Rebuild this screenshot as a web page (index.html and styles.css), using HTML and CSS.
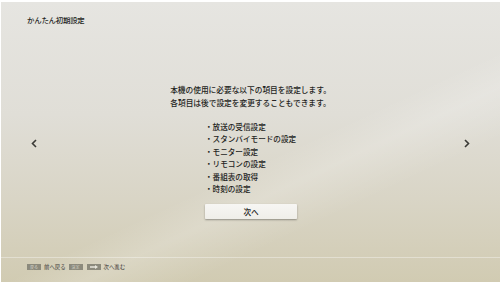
FILE: index.html
```html
<!DOCTYPE html>
<html lang="ja">
<head>
    <meta charset="UTF-8">
    <meta name="viewport" content="width=device-width, initial-scale=1.0">
    <title>かんたん初期設定</title>
    <link rel="stylesheet" href="styles.css">
</head>
<body>
    <div class="screen">
        <header class="title-bar">
            <h1>かんたん初期設定</h1>
        </header>

        <main class="setup">
            <div class="nav nav-prev">
                <svg width="6" height="9" viewBox="0 0 6 9"><path d="M5 1 L1.5 4.5 L5 8" fill="none" stroke="#3a3a36" stroke-width="1.6"/></svg>
            </div>

            <div class="content">
                <p class="message">本機の使用に必要な以下の項目を設定します。<br>各項目は後で設定を変更することもできます。</p>
                <div class="steps">
                    <ul>
                        <li>・放送の受信設定</li>
                        <li>・スタンバイモードの設定</li>
                        <li>・モニター設定</li>
                        <li>・リモコンの設定</li>
                        <li>・番組表の取得</li>
                        <li>・時刻の設定</li>
                    </ul>
                    <button class="next-btn">次へ</button>
                </div>
            </div>

            <div class="nav nav-next">
                <svg width="6" height="9" viewBox="0 0 6 9"><path d="M1 1 L4.5 4.5 L1 8" fill="none" stroke="#3a3a36" stroke-width="1.6"/></svg>
            </div>
        </main>

        <footer class="guide">
            <span class="key">戻る</span><span class="label">前へ戻る</span>
            <span class="key">決定</span>
            <span class="key key-arrow">
                <svg width="8" height="4" viewBox="0 0 8 4"><path d="M0 1.2 H5 V0 L8 2 L5 4 V2.8 H0 Z" fill="#e8e6dc"/></svg>
            </span><span class="label">次へ進む</span>
        </footer>
    </div>
</body>
</html>
```

FILE: styles.css
```css
body {
    margin: 0;
    background: #ffffff;
    font-family: "Noto Sans CJK JP", "Noto Sans", sans-serif;
    color: #242422;
}

.screen {
    margin: 2px 2px 2px 1px;
    height: 280px;
    display: flex;
    flex-direction: column;
    background:
        linear-gradient(155deg, rgba(255, 255, 255, 0) 55%, rgba(255, 255, 255, 0.18) 62%, rgba(255, 255, 255, 0) 72%),
        linear-gradient(to bottom, #e6e5e1 0%, #e0ded7 40%, #d9d5c6 70%, #d1cbb2 100%);
}

.title-bar {
    padding: 12px 0 0 26px;
    height: 12px;
}

.title-bar h1 {
    margin: 0;
    font-size: 7.4px;
    line-height: 12px;
    font-weight: 500;
    letter-spacing: -0.2px;
}

.setup {
    flex: 1;
    display: grid;
    grid-template-columns: 66px 1fr 66px;
}

.nav {
    display: flex;
    align-items: center;
    justify-content: center;
    padding-top: 4px;
}

.content {
    padding-top: 57px;
    display: flex;
    flex-direction: column;
    align-items: center;
}

.message {
    margin: 0;
    font-size: 7.7px;
    line-height: 13px;
    font-weight: 500;
    text-align: center;
}

.steps {
    width: 93px;
    margin-top: 12px;
    margin-left: 2px;
}

.steps ul {
    list-style: none;
    margin: 0;
    padding: 0;
}

.steps li {
    font-size: 7.6px;
    line-height: 12.4px;
    font-weight: 500;
    white-space: nowrap;
}

.next-btn {
    display: block;
    margin-top: 9px;
    width: 92px;
    height: 15px;
    padding: 0;
    border: none;
    border-radius: 1px;
    background: linear-gradient(to bottom, #f7f6f3, #efeee9);
    box-shadow: 0 1px 2px rgba(0, 0, 0, 0.35);
    font-family: inherit;
    font-size: 7.6px;
    font-weight: 500;
    color: #242422;
}

.guide {
    height: 25px;
    border-top: 1px solid rgba(255, 255, 255, 0.35);
    display: flex;
    align-items: center;
    padding-left: 26px;
    padding-bottom: 6px;
    box-sizing: border-box;
}

.key {
    width: 14px;
    height: 6px;
    background: #8c8a7c;
    color: #d8d6cc;
    font-size: 4px;
    line-height: 6px;
    text-align: center;
    display: flex;
    align-items: center;
    justify-content: center;
    margin-right: 3px;
}

.key-arrow {
    margin-left: 1px;
}

.label {
    font-size: 5.4px;
    line-height: 6px;
    margin-right: 3px;
    color: #3a3a36;
}
```
